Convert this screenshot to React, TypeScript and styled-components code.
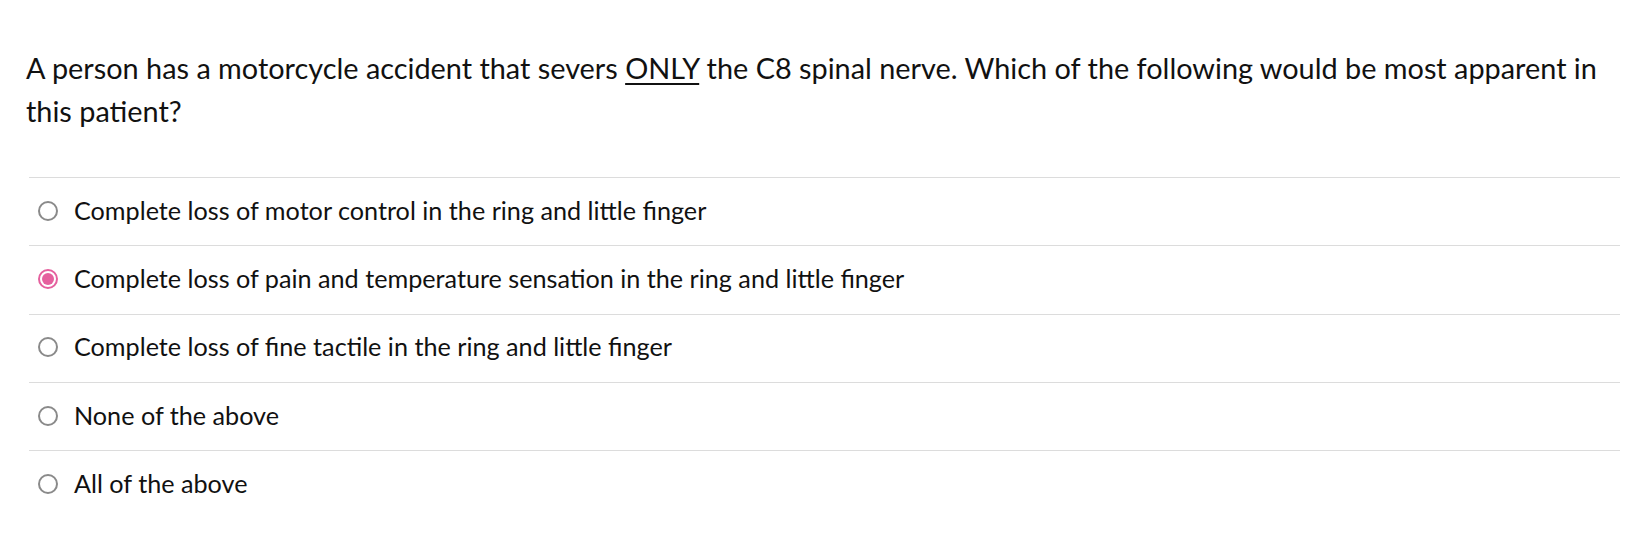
import React from "react";
import styled, { createGlobalStyle } from "styled-components";

const Global = createGlobalStyle`
  html, body { margin: 0; padding: 0; background: #fff; }
  body { font-family: Lato, "Noto Sans", sans-serif; color: #111; }
`;

const Page = styled.div`
  padding: 47px 16px 0 26px;
`;

const Question = styled.p`
  margin: 0 0 44px 0;
  font-size: 28.85px;
  line-height: 43px;
  color: #111;
`;

const U = styled.span`
  text-decoration: underline;
  text-underline-offset: 4px;
  text-decoration-thickness: 2px;
`;

const List = styled.div`
  margin-left: 3px;
  display: flex;
  flex-direction: column;
`;

const Row = styled.label`
  box-sizing: border-box;
  display: flex;
  align-items: center;
  height: 68.3px;
  border-top: 1px solid #dcdcdc;
  padding: 0 0 2px 9px;
  gap: 16px;
  font-size: 25.2px;
  color: #111;
`;

const Text = styled.span`
  padding-bottom: 2px;
`;

const Radio = styled.span<{ $checked?: boolean }>`
  box-sizing: border-box;
  width: 20px;
  height: 20px;
  border-radius: 50%;
  flex: none;
  border: 2px solid ${(p) => (p.$checked ? "#e5609e" : "#8a8a8a")};
  display: flex;
  align-items: center;
  justify-content: center;
  &::after {
    content: "";
    display: ${(p) => (p.$checked ? "block" : "none")};
    width: 12px;
    height: 12px;
    border-radius: 50%;
    background: #e5609e;
  }
`;

const options = [
  "Complete loss of motor control in the ring and little finger",
  "Complete loss of pain and temperature sensation in the ring and little finger",
  "Complete loss of fine tactile in the ring and little finger",
  "None of the above",
  "All of the above",
];

export default function App() {
  return (
    <>
      <Global />
      <Page>
        <Question>
          A person has a motorcycle accident that severs <U>ONLY</U> the C8 spinal nerve. Which of the following would be most apparent in this patient?
        </Question>
        <List>
          {options.map((o, i) => (
            <Row key={i}>
              <Radio $checked={i === 1} />
              <Text>{o}</Text>
            </Row>
          ))}
        </List>
      </Page>
    </>
  );
}
